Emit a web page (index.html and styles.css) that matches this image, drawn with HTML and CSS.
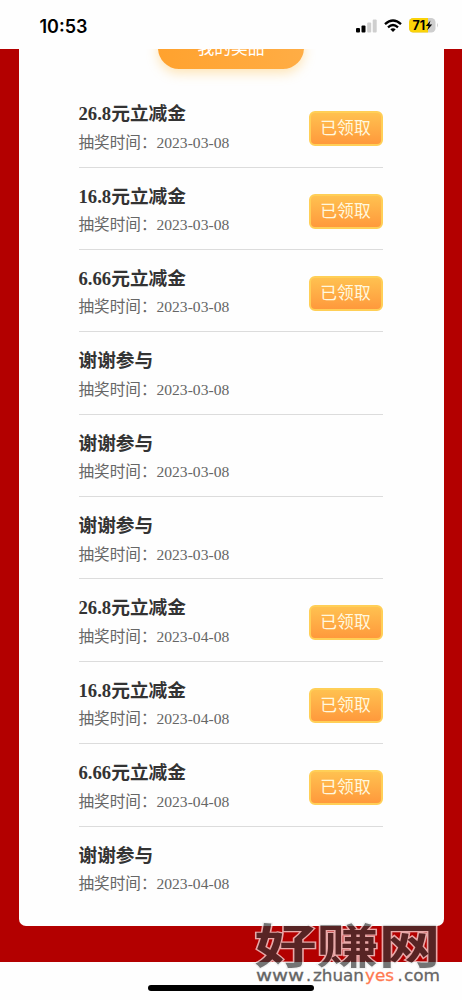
FILE: index.html
```html
<!DOCTYPE html>
<html lang="zh-CN">
<head>
<meta charset="utf-8">
<title>我的奖品</title>
<link rel="stylesheet" href="styles.css">
</head>
<body>
<div class="screen">
  <header class="status">
    <span class="clock">10:53</span>
    <div class="indicators">
      <svg class="signal" width="21" height="14" viewBox="0 0 21 14"><rect x="0" y="9" width="4" height="4.5" rx="1"/><rect x="5.5" y="6.5" width="4" height="7" rx="1"/><g fill="#cfcfcf"><rect x="11.2" y="3.5" width="4" height="10" rx="1"/><rect x="16.7" y=".5" width="4" height="13" rx="1"/></g></svg>
      <svg class="wifi" width="18" height="14" viewBox="0 0 18 14"><g fill="none" stroke="#000" stroke-width="2.3"><path d="M1 5.2Q9-2.3 17 5.2"/><path d="M4 8.3Q9 3.8 14 8.3"/></g><path d="M6.3 10.3Q9 8.2 11.7 10.3L9 13Z"/></svg>
      <svg class="battery" width="30" height="15" viewBox="0 0 30 15"><defs><clipPath id="cell"><rect width="26.5" height="14.5" rx="4.3"/></clipPath></defs><g clip-path="url(#cell)"><rect width="27" height="15" fill="#cecece"/><rect width="19" height="15" fill="#fbd308"/></g><path d="M28 5Q30 7.2 28 9.5Z" fill="#cecece"/><text x="3.6" y="12" class="level" textLength="12.6">71</text><path d="M21.5 2.5L16.7 8H19.6L18.2 12.3L23.2 6.5H20.3Z"/></svg>
    </div>
  </header>
  <main class="page">
    <section class="card">
      <div class="tab">我的奖品</div>
      <ul class="list">
        <li class="row"><div><h2>26.8元立减金</h2><p>抽奖时间：2023-03-08</p></div><button>已领取</button></li>
        <li class="row"><div><h2>16.8元立减金</h2><p>抽奖时间：2023-03-08</p></div><button>已领取</button></li>
        <li class="row"><div><h2>6.66元立减金</h2><p>抽奖时间：2023-03-08</p></div><button>已领取</button></li>
        <li class="row"><div><h2>谢谢参与</h2><p>抽奖时间：2023-03-08</p></div></li>
        <li class="row"><div><h2>谢谢参与</h2><p>抽奖时间：2023-03-08</p></div></li>
        <li class="row"><div><h2>谢谢参与</h2><p>抽奖时间：2023-03-08</p></div></li>
        <li class="row"><div><h2>26.8元立减金</h2><p>抽奖时间：2023-04-08</p></div><button>已领取</button></li>
        <li class="row"><div><h2>16.8元立减金</h2><p>抽奖时间：2023-04-08</p></div><button>已领取</button></li>
        <li class="row"><div><h2>6.66元立减金</h2><p>抽奖时间：2023-04-08</p></div><button>已领取</button></li>
        <li class="row"><div><h2>谢谢参与</h2><p>抽奖时间：2023-04-08</p></div></li>
      </ul>
    </section>
  </main>
  <footer class="home"><span class="bar"></span></footer>
  <svg class="mark" width="210" height="80" viewBox="0 0 210 80">
    <defs>
      <linearGradient id="ink" gradientUnits="userSpaceOnUse" x1="0" y1="-37" x2="0" y2="-1"><stop offset="0" stop-color="#747474"/><stop offset="0" stop-color="#572424"/><stop offset="1" stop-color="#572424"/><stop offset="1" stop-color="#747474"/></linearGradient>
      <linearGradient id="edge" gradientUnits="userSpaceOnUse" x1="0" y1="-37" x2="0" y2="-1"><stop offset="0" stop-color="#f3f3f3"/><stop offset="0" stop-color="#e8a8a8"/><stop offset="1" stop-color="#e8a8a8"/><stop offset="1" stop-color="#f3f3f3"/></linearGradient>
    </defs>
    <text class="brand" transform="translate(2.5 43) scale(1.32 1)" textLength="141" x="0" y="0">好赚网</text>
    <g class="site">
      <text x="4" y="61" textLength="48" lengthAdjust="spacingAndGlyphs">www</text>
      <text x="54" y="61">.</text>
      <text x="61" y="61" textLength="51" lengthAdjust="spacingAndGlyphs">zhuan</text>
      <text class="accent" x="113" y="61" textLength="29" lengthAdjust="spacingAndGlyphs">yes</text>
      <text x="145.5" y="61">.</text>
      <text x="152" y="61" textLength="36" lengthAdjust="spacingAndGlyphs">com</text>
    </g>
  </svg>
</div>
</body>
</html>
```
FILE: styles.css
```css
* { box-sizing: border-box; }
body { margin: 0; background: #fefefe; }
.screen { position: relative; width: 462px; height: 1000px; overflow: hidden; display: flex; flex-direction: column; background: #fefefe; }
.status { height: 49px; flex: none; display: flex; justify-content: space-between; align-items: flex-start; padding: 15px 23px 0 39.5px; }
.clock { font: 600 18px/23px Inter, sans-serif; color: #000; }
.indicators { display: flex; align-items: center; padding-top: 3px; }
.wifi { margin-left: 7px; }
.battery { margin-left: 7px; }
.level { font: 700 12.5px Inter, sans-serif; }
.page { height: 913px; flex: none; background: #b30000; padding: 0 18.5px 36px; overflow: hidden; }
.card { height: 877px; background: #fefefe; border-radius: 0 0 7px 7px; overflow: hidden; }
.tab { width: 146px; height: 42px; margin: -22px auto 0; border-radius: 21px; background: linear-gradient(90deg, #ffa22e, #ffad45); box-shadow: 0 4px 12px rgba(255, 190, 70, .4); color: #fff; text-align: center; font: 16.8px/43px "Liberation Serif", "Noto Sans CJK SC", sans-serif; }
.list { list-style: none; margin: 16.2px 0 0; padding: 0 61px 0 60px; }
.row { height: 82.38px; display: flex; justify-content: space-between; border-bottom: 1px solid #dcdcdc; padding-top: 15px; font-family: "Liberation Serif", "Noto Sans CJK SC", serif; }
.row:last-child { border-bottom: 0; }
.row h2 { margin: 0; font-size: 18.7px; line-height: 27px; font-weight: 700; color: #333; }
.row p { margin: 2.5px 0 0; font-size: 15.6px; line-height: 26px; color: #666; }
.row button { margin: 11px 0 0; width: 74px; height: 35px; padding: 0; border: 2px solid #ffcf57; border-radius: 6px; background: linear-gradient(#ffc150, #ff993c); color: #fff8df; font: 16.8px/29px "Liberation Serif", "Noto Sans CJK SC", sans-serif; }
.home { flex: 1; display: flex; justify-content: center; padding-top: 23px; }
.bar { width: 166px; height: 6px; border-radius: 3px; background: #000; }
.mark { position: absolute; left: 252px; top: 920px; }
.brand { font: 700 47px "Noto Sans CJK SC", sans-serif; fill: url(#ink); stroke: url(#edge); stroke-width: 2.4px; paint-order: stroke; }
.site { font: 16px "DejaVu Sans", sans-serif; fill: #666; stroke: #666; stroke-width: .3px; }
.accent { fill: #ff7950; stroke: #ff7950; }
```
